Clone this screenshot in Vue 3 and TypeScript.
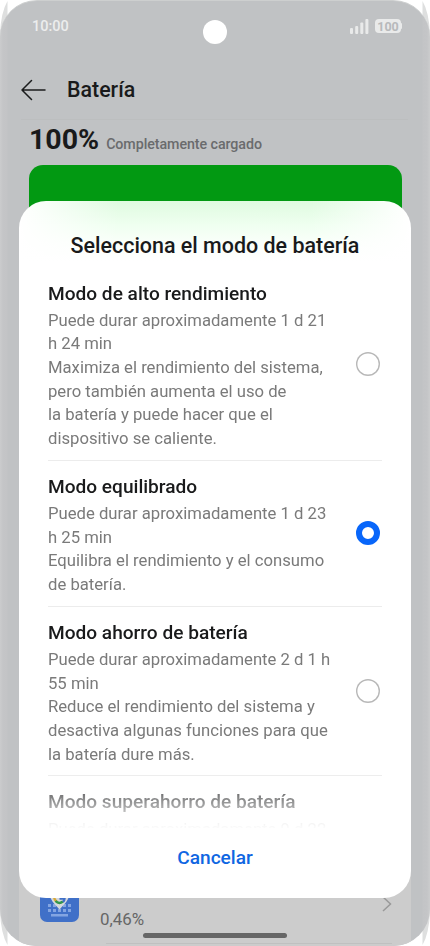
<script setup lang="ts">
import { ref } from 'vue'

interface Mode {
  id: string
  title: string
  lines: string[]
}

const modes: Mode[] = [
  {
    id: 'alto',
    title: 'Modo de alto rendimiento',
    lines: [
      'Puede durar aproximadamente 1 d 21',
      'h 24 min',
      'Maximiza el rendimiento del sistema,',
      'pero también aumenta el uso de',
      'la batería y puede hacer que el',
      'dispositivo se caliente.',
    ],
  },
  {
    id: 'equilibrado',
    title: 'Modo equilibrado',
    lines: [
      'Puede durar aproximadamente 1 d 23',
      'h 25 min',
      'Equilibra el rendimiento y el consumo',
      'de batería.',
    ],
  },
  {
    id: 'ahorro',
    title: 'Modo ahorro de batería',
    lines: [
      'Puede durar aproximadamente 2 d 1 h',
      '55 min',
      'Reduce el rendimiento del sistema y',
      'desactiva algunas funciones para que',
      'la batería dure más.',
    ],
  },
  {
    id: 'superahorro',
    title: 'Modo superahorro de batería',
    lines: ['Puede durar aproximadamente 9 d 22'],
  },
]

const selected = ref('equilibrado')
</script>

<template>
  <div class="stage">
    <svg class="edges" viewBox="0 0 430 946" aria-hidden="true">
      <path d="M7.5 1Q1 12 0 34V912Q1 934 7.5 945ZM422.500 1Q429 12 430 34V912Q429 934 422.500 945Z" fill="#dedfdf" />
    </svg>
    <main class="phone">
      <header class="status">
        <span class="time">10:00</span>
        <span class="camera"></span>
        <span class="indicators">
          <svg class="signal" width="19" height="15" viewBox="0 0 19 15" fill="#e9eaea">
            <rect x="0" y="9" width="3" height="6" rx="1" />
            <rect x="5.200" y="7" width="3" height="8" rx="1" />
            <rect x="10.300" y="3.500" width="3" height="11.500" rx="1" />
            <rect x="15.400" y="0" width="3" height="15" rx="1" />
          </svg>
          <span class="charge">100</span>
        </span>
      </header>

      <div class="appbar">
        <svg width="26" height="22" viewBox="0 0 26 22" fill="none" stroke="#1b1c1d" stroke-width="1.5" stroke-linecap="round" stroke-linejoin="round">
          <path d="M10.500 1.500L1 11L10.500 20.500M1 11H24" />
        </svg>
        <h1>Batería</h1>
      </div>

      <div class="level"><strong>100%</strong><span>Completamente cargado</span></div>
      <div class="bar"></div>

      <div class="usage">
        <svg class="keyboard" width="39" height="42" viewBox="0 0 39 42">
          <rect width="39" height="42" rx="7" fill="#4070c8" />
          <g fill="#83a5e2">
            <rect x="8" y="24" width="3" height="3" /><rect x="13" y="24" width="3" height="3" /><rect x="23" y="24" width="3" height="3" /><rect x="28" y="24" width="3" height="3" />
            <rect x="8" y="29" width="3" height="3" /><rect x="13" y="29" width="3" height="3" /><rect x="18" y="29" width="3" height="3" /><rect x="23" y="29" width="3" height="3" /><rect x="28" y="29" width="3" height="3" />
            <rect x="11" y="34" width="17" height="2.500" />
          </g>
          <path d="M10 15A9.500 9.500 0 0 1 29 15Q29 19 24.500 24L19.500 29.500L14.500 24Q10 19 10 15Z" fill="#d5d8dc" />
          <path d="M14.300 16.500A5.300 5.300 0 0 0 17 21.800" fill="none" stroke="#d8a936" stroke-width="2.400" />
          <path d="M15.500 21Q19 24.500 23 21.500" fill="none" stroke="#32964d" stroke-width="2.400" />
          <path d="M19.500 18.500H24.500Q24.500 20.500 23 22" fill="none" stroke="#4070c8" stroke-width="2.400" />
        </svg>
        <span class="percent">0,46%</span>
        <svg class="chevron" width="10" height="16" viewBox="0 0 10 16" fill="none" stroke="#999" stroke-width="1.500"><path d="M1 1L8.500 8L1 15" /></svg>
      </div>
      <span class="home"></span>
      <span class="rule"></span>
    </main>

    <section class="dialog" role="dialog" aria-modal="true">
      <h2>Selecciona el modo de batería</h2>
      <div class="options" role="radiogroup">
        <div
          v-for="mode in modes"
          :key="mode.id"
          class="option"
          :class="{ peek: mode.id === 'superahorro' }"
          role="radio"
          :aria-checked="selected === mode.id"
          @click="selected = mode.id"
        >
          <div class="copy">
            <h3>{{ mode.title }}</h3>
            <p v-for="line in mode.lines" :key="line">{{ line }}</p>
          </div>
          <span class="radio" :class="{ on: selected === mode.id }"></span>
        </div>
      </div>
      <button type="button" class="cancel">Cancelar</button>
    </section>
  </div>
</template>

<style>
body {
  background: #fff;
}
</style>

<style scoped>
* {
  box-sizing: border-box;
}
h1,
h2,
h3,
p {
  margin: 0;
}
.stage {
  position: relative;
  width: 430px;
  height: 946px;
  overflow: hidden;
  font-family: Roboto, sans-serif;
  color: #191a1b;
}
.edges {
  position: absolute;
  inset: 0;
}
.phone {
  position: relative;
  display: flex;
  flex-direction: column;
  height: 946px;
  border-radius: 37px;
  overflow: hidden;
  background:
    linear-gradient(#ccc, #ccc) 19px 870px / 392px 76px no-repeat,
    linear-gradient(90deg, #cbcccd 0, #c4c5c7 3px, #c3c4c6 7px, #c0c2c4 8px, #c0c2c4 422px, #c3c4c6 423px, #c4c5c7 427px, #cbcccd 430px);
  border-top: 1px solid #cdcfcf;
}
.status {
  display: grid;
  grid-template-columns: 1fr 24px 1fr;
  align-items: center;
  height: 62px;
  padding: 0 29px 0 32px;
}
.time {
  font-size: 14.500px;
  font-weight: 500;
  line-height: 20px;
  color: #eceded;
  margin-top: -11px;
}
.camera {
  width: 24px;
  height: 24px;
  border-radius: 50%;
  background: #fff;
  margin-left: -1.500px;
}
.indicators {
  display: flex;
  justify-content: flex-end;
  align-items: center;
  gap: 6px;
  margin-top: -12px;
}
.charge {
  position: relative;
  width: 26px;
  height: 14px;
  border-radius: 4px;
  background: #e9eaea;
  color: #b7b9bb;
  font-size: 12.500px;
  font-weight: 700;
  line-height: 15px;
  text-align: center;
}
.charge::after {
  content: '';
  position: absolute;
  right: -1px;
  top: 4px;
  width: 2px;
  height: 6px;
  border-radius: 1px;
  background: #e9eaea;
}
.appbar {
  display: flex;
  align-items: center;
  gap: 20px;
  height: 57px;
  margin: 0 22px 0 21px;
  border-bottom: 1px solid #bcbebf;
  padding-bottom: 2px;
}
.appbar h1 {
  font-size: 21.400px;
  font-weight: 500;
  line-height: 28px;
}
.level {
  display: flex;
  align-items: baseline;
  gap: 7px;
  height: 45px;
  padding: 3px 29px 0;
}
.level strong {
  font-size: 28.500px;
  line-height: 34px;
  font-weight: 700;
}
.level span {
  font-size: 14.250px;
  font-weight: 500;
  letter-spacing: -0.070px;
  color: #6a6b6d;
}
.bar {
  height: 60px;
  margin: 0 28.500px;
  border-radius: 14px;
  background: #029912;
}
.usage {
  display: flex;
  align-items: flex-end;
  height: 42px;
  margin: 655px 38px 0 40px;
  flex: none;
}
.percent {
  margin: 0 auto -7px 21px;
  font-size: 16.900px;
  line-height: 20px;
  color: #666;
}
.chevron {
  margin-bottom: 10px;
}
.home {
  width: 144px;
  height: 5px;
  margin: 11px 0 0 143px;
  border-radius: 3px;
  background: #666;
  flex: none;
}
.rule {
  height: 1px;
  margin: 5px 38px 0 106px;
  background: #c0c0c0;
  flex: none;
}
.dialog {
  position: absolute;
  top: 200.500px;
  left: 19px;
  width: 392px;
  height: 697px;
  display: flex;
  flex-direction: column;
  border-radius: 27px;
  background:
    linear-gradient(90deg, #fff 0, #fff0 100px, #fff0 292px, #fff 392px),
    linear-gradient(#dffbe0 0, #effff0 24px, #fafffa 42px, #fff 60px);
  overflow: hidden;
}
.dialog h2 {
  height: 67px;
  padding-top: 30px;
  font-size: 21.450px;
  font-weight: 500;
  line-height: 30px;
  text-align: center;
}
.options {
  height: 560.500px;
  padding: 0 29px;
  overflow: hidden;
  mask-image: linear-gradient(#000 504px, rgb(0 0 0 / 0.12) 553px, transparent 562px);
}
.option {
  display: flex;
  align-items: center;
  justify-content: space-between;
  padding: 14px 2px 9.200px 0;
  border-bottom: 1px solid #ececec;
}
.copy {
  white-space: nowrap;
}
.copy h3 {
  height: 27.300px;
  font-size: 19.100px;
  font-weight: 500;
  line-height: 24px;
}
.copy p {
  font-size: 16.680px;
  line-height: 23.630px;
  color: #7a7a7a;
}
.radio {
  width: 24px;
  height: 24px;
  flex: none;
  margin-top: -5px;
  box-shadow: inset 0 0 0 1.400px #b8b8b8;
  border-radius: 50%;
}
.radio.on {
  border: 6.500px solid #0866fa;
  box-shadow: none;
}
.peek .radio {
  visibility: hidden;
}
.cancel {
  align-self: center;
  margin-top: 15px;
  padding: 0;
  border: 0;
  background: none;
  font: 500 19.100px/30px Roboto, sans-serif;
  color: #0f66e2;
}
</style>
